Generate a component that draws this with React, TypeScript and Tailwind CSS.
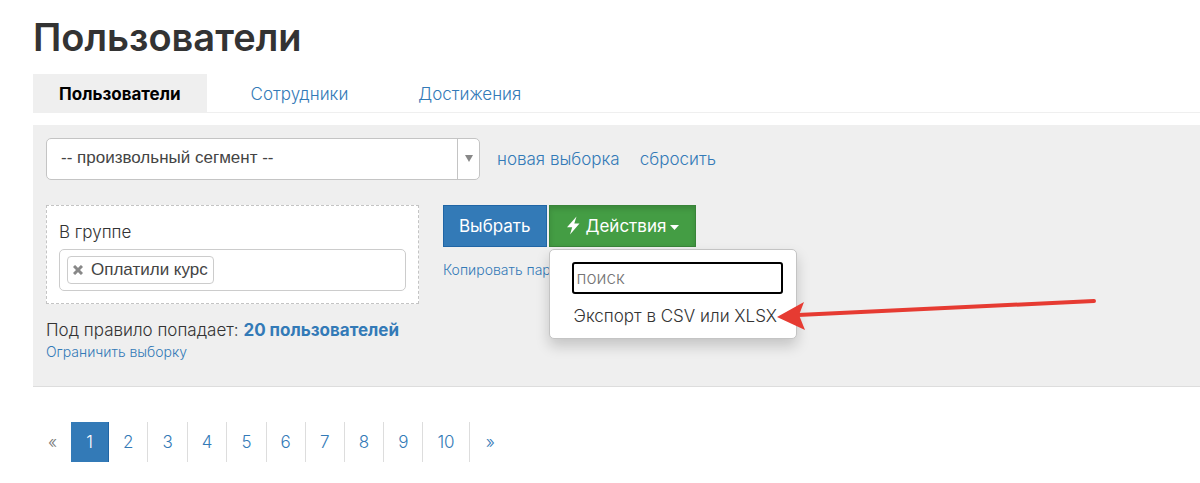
import type { ReactNode } from "react";
import { clsx } from "clsx";

const tabs = ["Пользователи", "Сотрудники", "Достижения"];
const pages = [1, 2, 3, 4, 5, 6, 7, 8, 9, 10];

type TextLinkProps = {
  children: ReactNode;
  className?: string;
};

function TextLink({ children, className }: TextLinkProps) {
  return (
    <a href="#" className={clsx("text-[#337ab7] hover:underline", className)}>
      {children}
    </a>
  );
}

function Tabs() {
  return (
    <nav className="flex gap-[18px] border-b border-[#efefef]">
      {tabs.map((tab, i) => (
        <a
          key={tab}
          href="#"
          aria-current={i === 0 ? "page" : undefined}
          className={clsx(
            "px-[26px] pt-2 pb-[6px] text-[17px] leading-6",
            i === 0 ? "bg-[#efefef] font-bold text-black" : "text-[#337ab7]",
          )}
        >
          {tab}
        </a>
      ))}
    </nav>
  );
}

function SegmentSelect() {
  return (
    <div className="relative w-[434px]">
      <select
        aria-label="Сегмент"
        className="block h-[42px] w-full appearance-none rounded-[5px] border border-[#c4c4c4] bg-white pr-8 pb-[2px] pl-[14px] font-['Liberation_Sans',sans-serif] text-[17px] font-normal text-[#444]"
      >
        <option>-- произвольный сегмент --</option>
      </select>
      <span
        aria-hidden="true"
        className="pointer-events-none absolute inset-y-px right-px flex w-[22px] items-center justify-center border-l border-[#c4c4c4]"
      >
        <svg width="8" height="7" viewBox="0 0 8 7" className="mb-[2px]">
          <path d="M0 0h8L4 7z" fill="#888" />
        </svg>
      </span>
    </div>
  );
}

function GroupFilter() {
  return (
    <div className="border border-dashed border-[#c4c4c4] bg-white p-3">
      <label htmlFor="group" className="mt-[2px] mb-[5px] block leading-6">
        В группе
      </label>
      <div className="flex h-[42px] items-center rounded-[5px] border border-[#ccc] px-[7px]">
        <span className="flex h-7 shrink-0 items-center gap-2 rounded-[4px] border border-[#ccc] px-[5px] font-['Liberation_Sans',sans-serif] text-[17px] font-normal text-[#444]">
          <button type="button" aria-label="Убрать">
            <svg width="10" height="10" viewBox="0 0 10 10" className="block">
              <path d="M1 1l8 8M9 1l-8 8" stroke="#888" strokeWidth="3" />
            </svg>
          </button>
          Оплатили курс
        </span>
        <input id="group" type="text" className="min-w-0 flex-1 outline-none" />
      </div>
    </div>
  );
}

function Arrow() {
  return (
    <svg
      aria-hidden="true"
      width="322"
      height="34"
      viewBox="0 0 322 34"
      className="pointer-events-none absolute top-[46px] left-[226px] max-w-none"
    >
      <path d="M22 19L318 5" stroke="#e63b32" strokeWidth="4" strokeLinecap="round" />
      <path d="M1 21L28 6L23 19L29 34z" fill="#e63b32" />
    </svg>
  );
}

function ActionsMenu() {
  return (
    <div className="absolute top-full left-0 z-10 mt-[2px] w-[248px] rounded-[5px] border border-[#c4c4c4] bg-white pt-3 pr-3 pb-[10px] pl-[22px] shadow-[0_7px_14px_rgba(0,0,0,0.18)]">
      <input
        type="search"
        aria-label="поиск"
        placeholder="поиск"
        className="block h-8 w-[211px] rounded-[3px] border-2 border-black px-[3px] text-[17px] outline-none placeholder:text-[#757575]"
      />
      <a href="#" className="mt-[10px] block px-[2px] leading-6 whitespace-nowrap text-[#333]">
        Экспорт в CSV или XLSX
      </a>
      <Arrow />
    </div>
  );
}

function Actions() {
  return (
    <div>
      <div className="flex gap-[2px] text-[17px] text-white">
        <button type="button" className="h-[42px] border border-[#2065a5] bg-[#337ab7] px-[15px] pt-[2px] font-normal">
          Выбрать
        </button>
        <div className="relative">
          <button
            type="button"
            aria-expanded="true"
            className="flex h-[42px] items-center border border-[#398439] bg-[#449d44] px-4 pt-[2px] font-normal shadow-[inset_0_3px_5px_rgba(0,0,0,0.13)]"
          >
            <svg width="14" height="19" viewBox="0 0 14 19" className="mr-[6px] mb-1">
              <path d="M10.500 0.500L1 11.200H6.200L4 18.500L13.500 7.500H8.300z" fill="#fff" />
            </svg>
            Действия
            <svg width="9" height="5" viewBox="0 0 9 5" className="ml-1">
              <path d="M0 0h9L4.500 5z" fill="#fff" />
            </svg>
          </button>
          <ActionsMenu />
        </div>
      </div>
      <TextLink className="mt-3 block text-[14px] leading-[22px]">Копировать параметры</TextLink>
    </div>
  );
}

function Pagination() {
  return (
    <nav aria-label="Страницы" className="mt-[35px] flex items-center text-[17px] leading-10">
      <span className="w-[38px] pl-[15px] text-[#777]">«</span>
      {pages.map((page) => (
        <a
          key={page}
          href="#"
          aria-current={page === 1 ? "page" : undefined}
          className={clsx(
            "border-r text-center",
            page === 1
              ? "min-w-[38px] border-[#2065a5] bg-[#337ab7] text-white"
              : "min-w-[39px] border-[#ddd] px-[14px] text-[#337ab7]",
          )}
        >
          {page}
        </a>
      ))}
      <a href="#" className="px-4 text-[#337ab7]">
        »
      </a>
    </nav>
  );
}

export default function App() {
  return (
    <main className="min-h-screen bg-white pt-[14px] pl-[33px] font-[Inter,sans-serif] text-[17px] font-light text-[#333]">
      <h1 className="mb-[14px] text-[38px] leading-[46px] font-semibold">Пользователи</h1>
      <Tabs />
      <section className="mt-3 border-b border-[#ddd] bg-[#efefef] px-[13px] pt-[13px] pb-6">
        <div className="flex items-center gap-[17px]">
          <SegmentSelect />
          <div className="flex gap-5 pt-[2px]">
            <TextLink>новая выборка</TextLink>
            <TextLink>сбросить</TextLink>
          </div>
        </div>
        <div className="mt-[25px] flex gap-6">
          <div className="w-[373px] shrink-0">
            <GroupFilter />
            <p className="mt-[14px] leading-6 whitespace-nowrap">
              Под правило попадает: <TextLink className="font-bold">20 пользователей</TextLink>
            </p>
            <TextLink className="block text-[14px] leading-5">Ограничить выборку</TextLink>
          </div>
          <Actions />
        </div>
      </section>
      <Pagination />
    </main>
  );
}
